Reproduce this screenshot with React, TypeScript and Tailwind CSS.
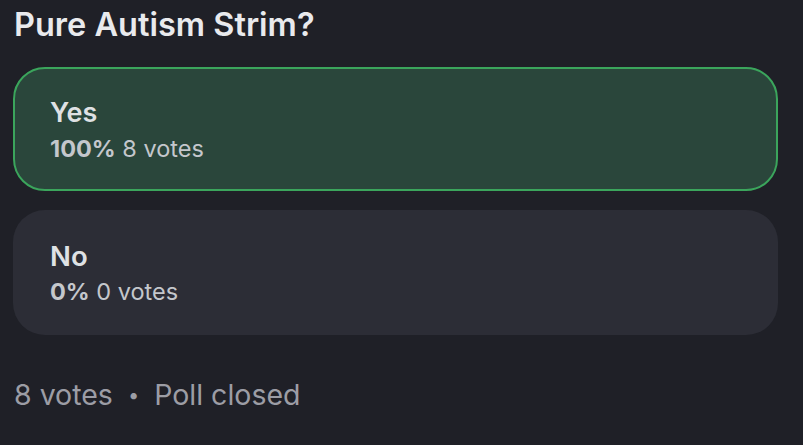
import React from "react";

export default function App() {
  return (
    <div
      className="w-[803px] h-[445px] bg-[#1f2027] overflow-hidden"
      style={{ fontFamily: "Inter, 'Noto Sans', sans-serif" }}
    >
      <div className="pl-[13px] pt-[5px] w-[778px]">
        <div className="pl-[1px] text-[32.5px] leading-[40px] font-semibold text-[#e9eaed]">
          Pure Autism Strim?
        </div>
        <div className="mt-[22px] flex flex-col gap-[19px]">
          <div className="h-[124px] rounded-[32px] border-2 border-[#3ba55c] bg-[#2a463b] pl-[35px] pt-[26px]">
            <div className="text-[27px] leading-[36px] font-semibold text-[#dfe1e4]">Yes</div>
            <div className="text-[23.5px] leading-[30px] text-[#c4c7cc] mt-[3px]">
              <span className="font-bold">100%</span> 8 votes
            </div>
          </div>
          <div className="h-[125px] rounded-[32px] bg-[#2c2d36] pl-[37px] pt-[28px]">
            <div className="text-[27.5px] leading-[36px] font-semibold text-[#dfe1e4]">No</div>
            <div className="text-[23.5px] leading-[30px] text-[#c4c7cc] mt-[3px]">
              <span className="font-bold">0%</span> 0 votes
            </div>
          </div>
        </div>
        <div className="mt-[42px] pl-[1px] text-[28.5px] leading-[36px] text-[#9c9da5] flex items-center">
          <span>8 votes</span>
          <span className="mx-[15px] text-[20px]">•</span>
          <span>Poll closed</span>
        </div>
      </div>
    </div>
  );
}
